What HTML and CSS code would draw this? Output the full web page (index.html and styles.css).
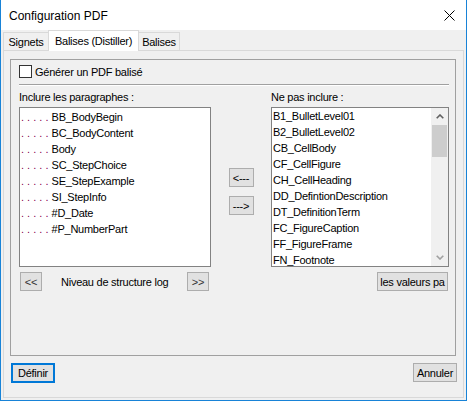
FILE: index.html
```html
<!DOCTYPE html>
<html lang="fr">
<head>
<meta charset="utf-8">
<title>Configuration PDF</title>
<link rel="stylesheet" href="styles.css">
</head>
<body>
<div class="window">
  <div class="titlebar">
    <span class="title">Configuration PDF</span>
    <svg class="close" width="11" height="11" viewBox="0 0 11 11"><path d="M0.5 0.5 L10.5 10.5 M10.5 0.5 L0.5 10.5" stroke="#000" stroke-width="1" fill="none"/></svg>
  </div>
  <div class="body">
    <div class="tabs">
      <div class="tab tab-signets">Signets</div>
      <div class="tab tab-active">Balises (Distiller)</div>
      <div class="tab tab-balises">Balises</div>
    </div>
    <div class="panel">
      <div class="group">
        <div class="check"><span class="box"></span><span class="check-label">Générer un PDF balisé</span></div>
        <div class="sep"></div>
        <div class="lists">
          <div class="col col-left">
            <div class="lbl">Inclure les paragraphes :</div>
            <div class="listbox listbox-left">
              <div class="item"><span class="dots">. . . . . </span>BB_BodyBegin</div>
              <div class="item"><span class="dots">. . . . . </span>BC_BodyContent</div>
              <div class="item"><span class="dots">. . . . . </span>Body</div>
              <div class="item"><span class="dots">. . . . . </span>SC_StepChoice</div>
              <div class="item"><span class="dots">. . . . . </span>SE_StepExample</div>
              <div class="item"><span class="dots">. . . . . </span>SI_StepInfo</div>
              <div class="item"><span class="dots">. . . . . </span>#D_Date</div>
              <div class="item"><span class="dots">. . . . . </span>#P_NumberPart</div>
            </div>
            <div class="nav">
              <button class="btn btn-nav">&lt;&lt;</button>
              <span class="nav-label">Niveau de structure log</span>
              <button class="btn btn-nav">&gt;&gt;</button>
            </div>
          </div>
          <div class="mid">
            <button class="btn btn-move">&lt;---</button>
            <button class="btn btn-move">---&gt;</button>
          </div>
          <div class="col col-right">
            <div class="lbl">Ne pas inclure :</div>
            <div class="listbox listbox-right">
              <div class="items">
                <div class="item item-r">B1_BulletLevel01</div>
                <div class="item item-r">B2_BulletLevel02</div>
                <div class="item item-r">CB_CellBody</div>
                <div class="item item-r">CF_CellFigure</div>
                <div class="item item-r">CH_CellHeading</div>
                <div class="item item-r">DD_DefintionDescription</div>
                <div class="item item-r">DT_DefinitionTerm</div>
                <div class="item item-r">FC_FigureCaption</div>
                <div class="item item-r">FF_FigureFrame</div>
                <div class="item item-r">FN_Footnote</div>
              </div>
              <div class="scrollbar">
                <div class="sb-arrow"><svg width="8" height="5" viewBox="0 0 8 5"><path d="M0.7 4.3 L4 1 L7.3 4.3" stroke="#606060" stroke-width="1.6" fill="none"/></svg></div>
                <div class="sb-thumb"></div>
                <div class="sb-track"></div>
                <div class="sb-arrow"><svg width="8" height="5" viewBox="0 0 8 5"><path d="M0.7 0.7 L4 4 L7.3 0.7" stroke="#a0a0a0" stroke-width="1.6" fill="none"/></svg></div>
              </div>
            </div>
            <div class="nav nav-right">
              <button class="btn btn-defaults">les valeurs pa</button>
            </div>
          </div>
        </div>
      </div>
      <div class="footer">
        <button class="btn btn-def">Définir</button>
        <button class="btn btn-cancel">Annuler</button>
      </div>
    </div>
  </div>
</div>
</body>
</html>
```

FILE: styles.css
```css
html, body {
  margin: 0;
  padding: 0;
  background: #ffffff;
}
body {
  font-family: "Liberation Sans", Arial, sans-serif;
  font-size: 11px;
  letter-spacing: -0.25px;
  color: #000;
}
.window {
  width: 465px;
  height: 400px;
  border-left: 1px solid #1883d7;
  border-right: 1px solid #1883d7;
  border-bottom: 1px solid #1883d7;
  background: #f0f0f0;
  display: flex;
  flex-direction: column;
}
.titlebar {
  height: 30px;
  background: #fff;
  display: flex;
  align-items: center;
  padding-left: 8px;
  padding-right: 11px;
  justify-content: space-between;
}
.title {
  font-size: 12px;
  letter-spacing: 0;
  margin-top: 1px;
}
.close {
  display: block;
}
.body {
  padding: 0 2px;
  flex: 1;
}
.tabs {
  height: 20px;
  display: flex;
  align-items: flex-end;
}
.tab {
  box-sizing: border-box;
  height: 18px;
  border: 1px solid #d9d9d9;
  border-bottom: none;
  background: #f0f0f0;
  display: flex;
  align-items: center;
  justify-content: center;
  padding-top: 1px;
}
.tab-signets {
  width: 45px;
  border-right: none;
}
.tab-active {
  width: 91px;
  height: 21px;
  background: #fff;
  margin-bottom: -1px;
  position: relative;
  z-index: 1;
  padding-top: 0;
}
.tab-balises {
  width: 41px;
  border-left: none;
}
.panel {
  box-sizing: border-box;
  height: 348px;
  border: 1px solid #d9d9d9;
  background: #f0f0f0;
  padding: 8px 7px 0 6px;
}
.group {
  box-sizing: border-box;
  height: 297px;
  border: 1px solid #a0a0a0;
  padding: 5px 0 0 8px;
}
.check {
  display: flex;
  align-items: center;
  height: 13px;
}
.box {
  box-sizing: border-box;
  width: 13px;
  height: 13px;
  border: 1px solid #333;
  background: #fff;
  margin-right: 3px;
}
.sep {
  height: 1px;
  background: #a0a0a0;
  border-bottom: 1px solid #fff;
  margin: 6px 6px 0 0;
}
.lists {
  display: flex;
  margin-top: 5px;
}
.col {
  display: flex;
  flex-direction: column;
}
.col-left {
  width: 192px;
}
.col-right {
  width: 178px;
}
.lbl {
  height: 13px;
  line-height: 13px;
  margin-bottom: 3px;
}
.listbox {
  box-sizing: border-box;
  height: 160px;
  border: 1px solid #828282;
  background: #fff;
}
.listbox-left {
  padding: 1px 0 0 1px;
}
.listbox-right {
  display: flex;
  overflow: hidden;
}
.items {
  flex: 1;
  padding-left: 1px;
  overflow: hidden;
}
.item {
  height: 16px;
  line-height: 16px;
  white-space: nowrap;
}
.dots {
  color: #86004f;
  letter-spacing: 0;
}
.scrollbar {
  width: 17px;
  background: #f0f0f0;
  display: flex;
  flex-direction: column;
}
.sb-arrow {
  height: 17px;
  display: flex;
  align-items: center;
  justify-content: center;
}
.sb-thumb {
  height: 32px;
  margin: 0 1px 0 1px;
  background: #cdcdcd;
}
.sb-track {
  flex: 1;
}
.nav {
  display: flex;
  align-items: center;
  margin-top: 5px;
  height: 19px;
}
.nav-right {
  justify-content: flex-end;
  padding-right: 1px;
}
.btn {
  box-sizing: border-box;
  font-family: "Liberation Sans", Arial, sans-serif;
  font-size: 11px;
  letter-spacing: -0.25px;
  color: #000;
  background: #e1e1e1;
  border: 1px solid #adadad;
  padding: 0;
  margin: 0;
  height: 19px;
  white-space: nowrap;
}
.btn-nav {
  width: 22px;
  color: #333;
}
.btn-nav:first-child {
  margin-left: 1px;
}
.nav-label {
  width: 112px;
  white-space: nowrap;
  margin-left: 19px;
  margin-right: 14px;
}
.btn-defaults {
  width: 71px;
  text-align: center;
}
.mid {
  width: 60px;
  display: flex;
  flex-direction: column;
  align-items: center;
  padding-top: 77px;
  gap: 9px;
}
.btn-move {
  width: 25px;
}
.footer {
  display: flex;
  justify-content: space-between;
  margin: 7px -1px 0 1px;
}
.btn-def {
  width: 44px;
  height: 20px;
  border: 2px solid #0078d7;
}
.btn-cancel {
  width: 44px;
}
```
